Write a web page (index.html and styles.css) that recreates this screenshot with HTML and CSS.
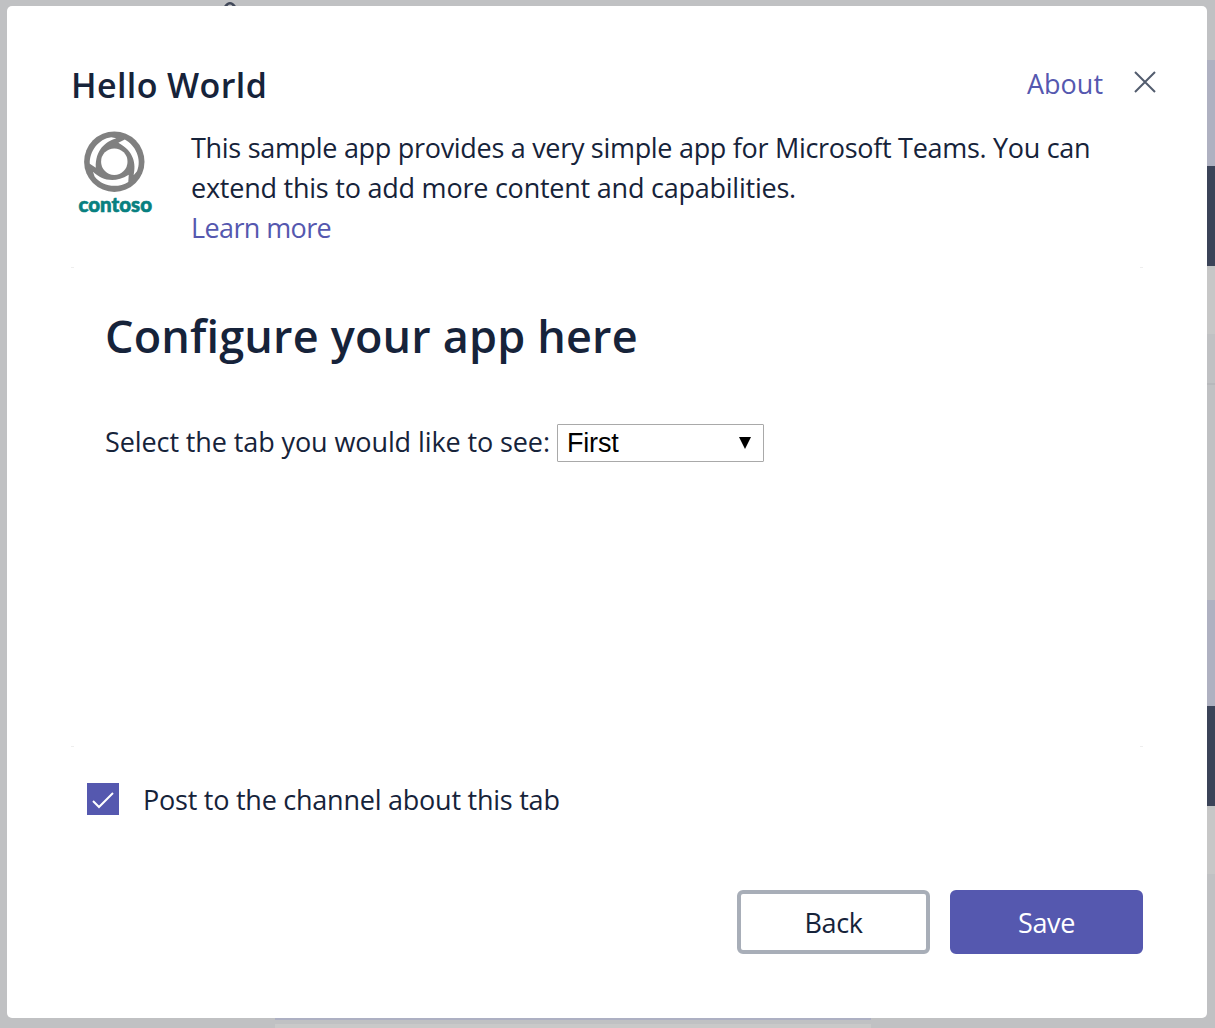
FILE: index.html
```html
<!DOCTYPE html>
<html lang="en">
<head>
<meta charset="utf-8">
<title>Hello World</title>
<link rel="stylesheet" href="styles.css">
</head>
<body>
<div class="backdrop">
  <div class="top-strip"><svg class="peek" width="12" height="6" viewBox="0 0 12 6"><path d="M1 7Q6-.5 11 7" fill="none" stroke="#414859" stroke-width="2.6"/></svg></div>
  <main class="dialog">
    <header class="header">
      <h1 class="title"><span>Hello World</span></h1>
      <a class="about">About</a>
      <svg class="close" width="22" height="22" viewBox="0 0 22 22"><path d="M1 1L21 21M21 1L1 21" stroke="#525c6e" stroke-width="2" fill="none"/></svg>
    </header>
    <section class="intro">
      <svg class="logo" width="82" height="86" viewBox="0 0 82 86">
        <circle cx="42.3" cy="32.7" r="30.2" fill="#808080"/>
        <g transform="translate(42.3 32.7)" fill="#fff">
          <circle r="13.2"/>
          <path d="M-24.5 2C-25-10-16-23-3-24.500L2-23.500C-9-20-19-12-18.500 6Z"/>
          <path transform="rotate(120)" d="M-24.5 2C-25-10-16-23-3-24.500L2-23.500C-9-20-19-12-18.500 6Z"/>
          <path transform="rotate(240)" d="M-24.5 2C-25-10-16-23-3-24.500L2-23.500C-9-20-19-12-18.500 6Z"/>
        </g>
        <text class="brand" x="6.500" y="82.500" textLength="73.500" lengthAdjust="spacingAndGlyphs">contoso</text>
      </svg>
      <div class="copy">
        <p class="line-one">This sample app provides a very simple app for Microsoft Teams. You can</p>
        <p class="line-two">extend this to add more content and capabilities.</p>
        <a class="learn">Learn more</a>
      </div>
    </section>
    <section class="config">
      <h2 class="config-title">Configure your app here</h2>
      <div class="field">
        <span class="label">Select the tab you would like to see:</span>
        <div class="select"><span>First</span><svg width="12" height="12" viewBox="0 0 12 12"><path d="M0 0H12L6 12Z"/></svg></div>
      </div>
    </section>
    <div class="post">
      <svg class="check" width="32" height="32" viewBox="0 0 32 32"><path d="M6 18L12 24L26 10" fill="none" stroke="#fff" stroke-width="2"/></svg>
      <span class="post-label">Post to the channel about this tab</span>
    </div>
    <footer class="actions">
      <button class="button back"><span>Back</span></button>
      <button class="button save"><span>Save</span></button>
    </footer>
  </main>
  <div class="side">
    <i class="accent first"></i><i class="dark"></i><i class="light"></i><i class="plain"></i>
    <i class="rule"></i><i class="gap"></i><i class="accent"></i><i class="dark"></i><i class="light"></i>
  </div>
  <div class="bottom-strip"></div>
</div>
</body>
</html>
```
FILE: styles.css
```css
* { box-sizing: border-box; }
body {
  margin: 0;
  font-family: "Open Sans", "Noto Sans", sans-serif;
  font-size: 27px;
  line-height: 40px;
  color: #16233a;
}
h1, h2, p { margin: 0; font-weight: 600; }
p { font-weight: 400; }
.backdrop {
  display: grid;
  width: 1215px;
  height: 1028px;
  grid-template: 6px 1012px 10px / 7px 1200px 8px;
  overflow: hidden;
  background: #c0c1c3;
}
.top-strip { grid-area: 1 / 2; display: flex; padding-left: 217px; }
.peek { display: block; }
.dialog {
  grid-area: 2 / 2;
  display: flex;
  flex-direction: column;
  padding: 54px 64px 64px;
  background: #fff;
  border-radius: 5px;
}
.header { display: flex; height: 48px; align-items: center; margin-right: -14px; white-space: nowrap; }
.title { width: 956px; padding-top: 2px; font-size: 34px; line-height: 48px; letter-spacing: .4px; }
.about { width: 107px; color: #5558af; }
.close { display: block; margin-top: -5px; }
.intro { display: flex; height: 160px; padding: 20px 0 0 1px; white-space: nowrap; }
.logo { width: 82px; margin: 1px 37px 0 0; }
.brand { font: 900 20px Lato, sans-serif; fill: #088080; stroke: #088080; stroke-width: .6px; }
.line-one { letter-spacing: -.3px; }
.line-two { letter-spacing: -.23px; }
.learn { color: #5558af; letter-spacing: -.62px; }
.config {
  width: 1072px;
  height: 480px;
  padding: 37px 34px;
  margin-top: -1px;
  background:
    linear-gradient(#eee, #eee) 0 0 / 3px 1px,
    linear-gradient(#eee, #eee) 100% 0 / 3px 1px,
    linear-gradient(#eee, #eee) 0 100% / 3px 1px,
    linear-gradient(#eee, #eee) 100% 100% / 3px 1px;
  background-repeat: no-repeat;
}
.config-title { font-size: 45px; line-height: 64px; letter-spacing: .17px; }
.field { display: flex; height: 38px; margin-top: 56px; align-items: center; }
.label { width: 452px; margin-top: -2px; white-space: nowrap; letter-spacing: -.1px; }
.select {
  display: flex;
  width: 207px;
  height: 38px;
  padding: 0 12px 0 9px;
  justify-content: space-between;
  align-items: center;
  border: 1px solid #a9a9a9;
  border-radius: 1px;
  font: 27px "Liberation Sans", Arial, sans-serif;
  letter-spacing: -.2px;
  color: #000;
}
.post { display: flex; height: 40px; margin: 32px 0 0 16px; align-items: center; }
.post-label { padding-top: 2px; letter-spacing: -.24px; }
.check { background: #5558af; margin-right: 24px; }
.actions { display: flex; justify-content: flex-end; gap: 20px; margin-top: 71px; }
.button {
  width: 193px;
  height: 64px;
  padding: 2px 0 0;
  border: 4px solid #a8aeb8;
  border-radius: 6px;
  background: #fff;
  font: inherit;
  letter-spacing: -.4px;
  color: #16233a;
}
.save { border-color: #5558af; background: #5558af; color: #fff; }
.side { grid-area: 1 / 3 / 4; display: flex; flex-direction: column; padding-top: 60px; }
.accent { height: 106px; background: #afb1c1; }
.dark { height: 100px; background: #3b4358; }
.light { height: 68px; background: #c7c7c7; border-top: 4px solid #c3c4c4; }
.plain { height: 49px; }
.rule { height: 2px; background: #b7b8bb; }
.gap { height: 215px; }
.bottom-strip {
  grid-area: 3 / 2;
  width: 596px;
  margin-left: 268px;
  border-top: 2px solid #adb0c3;
  border-bottom: 4px solid #c9c9c9;
}
```
